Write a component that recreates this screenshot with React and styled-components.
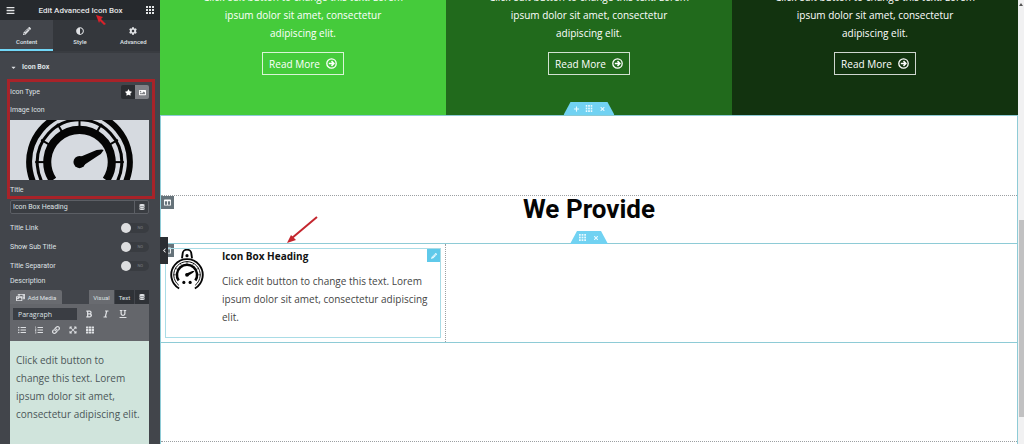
import React, { useState } from 'react';
import styled, { createGlobalStyle } from 'styled-components';
import {
  FaBars,
  FaPencilAlt,
  FaAdjust,
  FaCog,
  FaStar,
  FaImage,
  FaDatabase,
  FaLink,
  FaListUl,
  FaListOl,
  FaCaretDown,
  FaChevronLeft,
  FaColumns,
  FaPhotoVideo,
  FaExpandArrowsAlt,
  FaTh,
  FaBold,
  FaItalic,
  FaUnderline,
  FaPlus,
  FaTimes,
} from 'react-icons/fa';

const GlobalStyle = createGlobalStyle`
  * {
    box-sizing: border-box;
  }
  body {
    margin: 0;
    background: #fff;
    font-family: 'Roboto', sans-serif;
  }
  button, input, select, textarea {
    margin: 0;
    padding: 0;
    border: none;
    border-radius: 0;
    font-family: inherit;
    font-size: inherit;
    color: inherit;
  }
  button {
    display: flex;
    align-items: center;
    justify-content: center;
    background: none;
    cursor: pointer;
  }
  h1, h2, h3, p {
    margin: 0;
  }
`;

const Page = styled.div`
  display: flex;
  height: 100vh;
  overflow: hidden;
`;

/* ---------- panel ---------- */

const Panel = styled.aside`
  position: relative;
  display: flex;
  flex-direction: column;
  flex: 0 0 160px;
  background: #42454b;
  color: #dfe1e4;
  font-size: 7px;
`;

const PanelHeader = styled.header`
  display: flex;
  align-items: center;
  justify-content: space-between;
  flex: 0 0 20px;
  padding: 0 6px;
  background: #26292d;
  color: #e4e5e7;
  font-size: 9px;
`;

const PanelTitle = styled.h1`
  position: relative;
  font-size: 8px;
  font-weight: 500;
`;

const TitleArrow = styled.svg`
  position: absolute;
  left: 56px;
  top: 8px;
  width: 14px;
  height: 14px;
`;

const Tabs = styled.nav`
  display: flex;
  flex: 0 0 31px;
  background: #34373c;
`;

const Tab = styled.button`
  flex: 1;
  flex-direction: column;
  gap: 3px;
  padding-top: 2px;
  font-size: 6px;
  font-weight: 500;
  border-bottom: 2px solid ${({ $active }) => ($active ? '#71d7f7' : '#34373c')};
  background: ${({ $active }) => ($active ? '#42454b' : 'transparent')};

  svg {
    font-size: 8px;
  }
`;

const SectionTitle = styled.button`
  justify-content: flex-start;
  gap: 5px;
  flex: 0 0 28px;
  padding: 2px 10px 0;
  border-top: 2px solid #393c41;
  font-size: 7px;
  font-weight: 700;
`;

const Highlight = styled.div`
  flex: none;
  margin: 0 5px 0 7px;
  padding: 3px 3px 0 0;
  border: 3px solid #a82329;
`;

const Row = styled.div`
  display: flex;
  align-items: center;
  justify-content: space-between;
  height: 14px;
`;

const Choices = styled.div`
  display: flex;
  height: 14px;
  border-radius: 2px;
  overflow: hidden;
`;

const Choice = styled.button`
  width: 14px;
  color: #fff;
  font-size: 7px;
  background: ${({ $active }) => ($active ? '#808287' : '#2a2d31')};
`;

const Label = styled.label`
  display: flex;
  align-items: center;
  flex: none;
  height: 12px;
  margin-top: ${({ $gap }) => $gap || 0}px;
`;

const Preview = styled.svg`
  display: block;
  width: 100%;
  height: 60px;
  margin: 4px 0;
  background: #d6dae0;
`;

const Fields = styled.div`
  display: flex;
  flex-direction: column;
  flex: 1;
  min-height: 0;
  padding: 1px 11px 0 10px;
`;

const TextField = styled.div`
  display: flex;
  flex: 0 0 14px;
  border: 1px solid #5c5f65;
  border-radius: 2px;
  background: #3a3d42;
  margin-bottom: 4px;

  input {
    flex: 1;
    min-width: 0;
    padding: 0 2px;
    background: transparent;
  }
  button {
    width: 14px;
    border-left: 1px solid #5c5f65;
    font-size: 6px;
  }
`;

const SwitchRow = styled.label`
  display: flex;
  align-items: center;
  justify-content: space-between;
  flex: 0 0 19px;
`;

const Switch = styled.span`
  position: relative;
  display: flex;
  align-items: center;
  justify-content: flex-end;
  width: 28px;
  height: 10px;
  padding-right: 6px;
  border-radius: 5px;
  background: #393c41;
  color: #7d8086;
  font-size: 4px;

  input {
    appearance: none;
    position: absolute;
    left: 0;
    top: 0;
    width: 10px;
    height: 10px;
    border-radius: 50%;
    background: #dddee0;
  }
`;

const EditorHead = styled.div`
  display: flex;
  align-items: stretch;
  flex: 0 0 14px;
  margin-top: 3px;
  font-size: 6px;
`;

const MediaButton = styled.button`
  gap: 3px;
  width: 52px;
  margin-right: auto;
  border-radius: 2px 2px 0 0;
  background: #696b70;

  svg {
    font-size: 9px;
  }
`;

const ModeButton = styled.button`
  width: ${({ $width }) => $width}px;
  background: ${({ $active }) => ($active ? '#696b70' : '#2f3237')};
  border-left: 1px solid #42454b;
`;

const Toolbar = styled.div`
  display: flex;
  flex-direction: column;
  flex: 0 0 37px;
  gap: 4px;
  padding: 4px 3px;
  background: #64666b;
`;

const ToolRow = styled.div`
  display: flex;
  align-items: center;
  height: 12px;
`;

const FormatSelect = styled.select`
  width: 64px;
  height: 12px;
  margin-right: 3px;
  padding-left: 5px;
  appearance: none;
  background: #3a3d43;
  font-family: 'Open Sans', sans-serif;
  font-size: 7px;
`;

const Tool = styled.button`
  width: 17px;
  height: 12px;
  font-size: 8px;
`;

const Editor = styled.textarea`
  flex: 1;
  width: 100%;
  padding: 10px 9px 10px 6px;
  resize: none;
  overflow: hidden;
  outline: none;
  background: #d0e4dc;
  color: #4b5658;
  font-family: 'Open Sans', sans-serif;
  font-size: 10px;
  line-height: 18px;
`;

const Collapse = styled.button`
  position: absolute;
  z-index: 3;
  left: 100%;
  top: 237px;
  width: 8px;
  height: 27px;
  background: #2b2e32;
  color: #fff;
  font-size: 5px;
`;

/* ---------- canvas ---------- */

const Canvas = styled.main`
  position: relative;
  display: flex;
  flex-direction: column;
  flex: 1;
  min-width: 0;
  font-family: 'Open Sans', sans-serif;
`;

const Hero = styled.section`
  position: relative;
  display: grid;
  grid-template-columns: repeat(3, 1fr);
  grid-template-rows: 115px;
  flex: none;
`;

const HeroCard = styled.article`
  display: flex;
  flex-direction: column;
  align-items: center;
  justify-content: flex-end;
  gap: 10px;
  padding: 0 34px 40px;
  background: ${({ $color }) => $color};
  color: #fff;
  overflow: hidden;
`;

const HeroText = styled.p`
  max-width: 204px;
  font-size: 10px;
  line-height: 18px;
  text-align: center;
`;

const ReadMore = styled.a`
  display: flex;
  align-items: center;
  gap: 6px;
  flex: none;
  height: 23px;
  padding: 0 6px;
  border: 1px solid rgba(255, 255, 255, 0.8);
  color: #fff;
  font-size: 10px;
  text-decoration: none;
`;

const Handle = styled.div`
  position: absolute;
  z-index: 2;
  left: 50%;
  bottom: ${({ $above }) => ($above ? '100%' : '0')};
  transform: translateX(-50%);
  display: flex;
  height: 13px;
  padding: 0 6px;
  background: #71d2f2;
  clip-path: polygon(7px 0, calc(100% - 7px) 0, 100% 100%, 0 100%);

  button {
    width: 13px;
    color: #e8f9ff;
    font-size: 6px;
  }
`;

const Frame = styled.div`
  display: flex;
  flex-direction: column;
  flex: 1;
  min-height: 0;
  padding-bottom: 2px;
  border: 1px solid #8ecbd6;
  border-bottom: none;
`;

const Spacer = styled.div`
  flex: 0 0 79px;
`;

const HeadingRow = styled.section`
  position: relative;
  flex: 0 0 48px;
  border-top: 1px dotted #9b9fa2;
  text-align: center;
`;

const Heading = styled.h2`
  color: #050505;
  font-family: 'Roboto', sans-serif;
  font-size: 26px;
  font-weight: 700;
  line-height: 26px;
`;

const ColumnHandle = styled.button`
  position: absolute;
  left: 0;
  top: 0;
  width: 13px;
  height: 13px;
  background: #66737a;
  color: #fff;
  font-size: 7px;
`;

const BoxRow = styled.section`
  position: relative;
  display: grid;
  grid-template-columns: 1fr 2fr;
  flex: none;
  border-top: 1px solid #8ecbd6;
  border-bottom: 1px solid #8ecbd6;
`;

const Column = styled.div`
  min-width: 0;
  padding: 4px;
  border-right: 1px dotted #9b9fa2;

  &:last-child {
    border-right: none;
  }
`;

const IconBox = styled.article`
  position: relative;
  display: flex;
  gap: 18px;
  height: 90px;
  padding: 0 5px 0 4px;
  border: 1px solid #a9dce6;
`;

const BoxIcon = styled.svg`
  flex: none;
  width: 34px;
  height: 41px;
`;

const BoxTitle = styled.h3`
  color: #111;
  font-size: 10px;
  line-height: 14px;
`;

const BoxText = styled.p`
  margin-top: 9px;
  color: #454545;
  font-size: 10px;
  line-height: 18px;
`;

const EditButton = styled.button`
  position: absolute;
  right: 0;
  top: 0;
  width: 13px;
  height: 13px;
  background: #5fc9ea;
  color: #e8f9ff;
  font-size: 6px;
`;

const EmptyRow = styled.section`
  flex: 1;
  border-bottom: 1px dotted #9b9fa2;
`;

const Pointer = styled.svg`
  position: absolute;
  z-index: 3;
  left: 126px;
  top: 216px;
  width: 33px;
  height: 28px;
`;

const Track = styled.div`
  display: flex;
  flex-direction: column;
  align-items: center;
  flex: 0 0 6px;
  background: #f1f1f2;
`;

const Thumb = styled.div`
  width: 5px;
  height: 197px;
  margin-top: 212px;
  background: #c1c1c2;
`;

const TrackArrow = styled.svg`
  width: 6px;
  height: 8px;
`;

const ringPoint = (radius, degrees) => {
  const a = (degrees * Math.PI) / 180;
  return `${radius * Math.cos(a)} ${radius * Math.sin(a)}`;
};

const Ring = ({ radius, width, end = 60 }) => (
  <path
    d={`M${ringPoint(radius, 180 - end)} A${radius} ${radius} 0 1 1 ${ringPoint(radius, end)}`}
    fill="none"
    stroke="#050505"
    strokeWidth={width}
  />
);

const Gauge = () => (
  <g>
    <path
      d="M-16 -52 L-14 -66 A14 14 0 0 1 14 -66 L16 -52"
      fill="none"
      stroke="#050505"
      strokeWidth="6"
    />
    <circle cx="0" cy="-61" r="5" fill="#050505" />
    <Ring radius={50} width={6} />
    <Ring radius={42} width={3} end={52} />
    <Ring radius={32} width={8} end={34} />
    {[180, 210, 240, 270, 300, 330, 360].map((angle) => (
      <path
        key={angle}
        d={`M${ringPoint(44, angle)} L${ringPoint(35, angle)}`}
        stroke="#050505"
        strokeWidth="2"
      />
    ))}
    <circle cx="0" cy="0" r="6" fill="#050505" />
    <path d="M-2 -4 L17 -12 Q23 -13 24 -12 Q22 -8 18 -6 L3 4 Z" fill="#050505" />
    <circle cx="-10" cy="24" r="5" fill="#050505" />
    <circle cx="10" cy="24" r="5" fill="#050505" />
  </g>
);

const GridIcon = ({ size = 8 }) => (
  <svg width={size} height={size} viewBox="0 0 8 8" fill="currentColor" aria-hidden="true">
    {[0, 3, 6].map((x) =>
      [0, 3, 6].map((y) => <rect key={`${x}-${y}`} x={x} y={y} width="2" height="2" />)
    )}
  </svg>
);

const CircleArrow = () => (
  <svg width="11" height="11" viewBox="0 0 11 11" fill="none" stroke="currentColor" aria-hidden="true">
    <circle cx="5.5" cy="5.5" r="4.7" strokeWidth="1.3" />
    <path d="M2.8 5.5h5M5.5 3.1l2.4 2.4-2.4 2.4" strokeWidth="1.5" />
  </svg>
);

const tabs = [
  { name: 'Content', icon: <FaPencilAlt /> },
  { name: 'Style', icon: <FaAdjust /> },
  { name: 'Advanced', icon: <FaCog /> },
];

const switches = ['Title Link', 'Show Sub Title', 'Title Separator'];
const heroColors = ['#45cb3b', '#216a1c', '#12330f'];
const text = 'Click edit button to change this text. Lorem ipsum dolor sit amet, consectetur adipiscing elit.';

const App = () => {
  const [tab, setTab] = useState('Content');
  const [title, setTitle] = useState('Icon Box Heading');
  const [description, setDescription] = useState(text);

  return (
    <Page>
      <GlobalStyle />
      <Panel>
        <PanelHeader>
          <button aria-label="Menu"><FaBars /></button>
          <PanelTitle>
            Edit Advanced Icon Box
            <TitleArrow viewBox="0 0 14 14" aria-hidden="true">
              <path d="M2 1 L9 3 L7 5 L12 10 L10 11 L6 7 L5 9 Z" fill="#d8222a" />
            </TitleArrow>
          </PanelTitle>
          <button aria-label="Widgets"><GridIcon /></button>
        </PanelHeader>
        <Tabs>
          {tabs.map(({ name, icon }) => (
            <Tab key={name} $active={tab === name} onClick={() => setTab(name)}>
              {icon}
              {name}
            </Tab>
          ))}
        </Tabs>
        <SectionTitle><FaCaretDown />Icon Box</SectionTitle>
        <Highlight>
          <Row>
            <span>Icon Type</span>
            <Choices>
              <Choice aria-label="Icon"><FaStar /></Choice>
              <Choice aria-label="Image" $active><FaImage /></Choice>
            </Choices>
          </Row>
          <Label as="div" $gap={5}>Image Icon</Label>
          <Preview viewBox="-69 -42 138 60" preserveAspectRatio="xMidYMid slice" role="img">
            <Gauge />
          </Preview>
          <Label htmlFor="title">Title</Label>
        </Highlight>
        <Fields>
          <TextField>
            <input id="title" value={title} onChange={(e) => setTitle(e.target.value)} />
            <button aria-label="Dynamic title"><FaDatabase /></button>
          </TextField>
          {switches.map((name) => (
            <SwitchRow key={name}>
              {name}
              <Switch>
                <input type="checkbox" />
                NO
              </Switch>
            </SwitchRow>
          ))}
          <Label htmlFor="description">Description</Label>
          <EditorHead>
            <MediaButton><FaPhotoVideo />Add Media</MediaButton>
            <ModeButton $width={26} $active>Visual</ModeButton>
            <ModeButton $width={20}>Text</ModeButton>
            <ModeButton $width={15} aria-label="Dynamic text"><FaDatabase /></ModeButton>
          </EditorHead>
          <Toolbar>
            <ToolRow>
              <FormatSelect aria-label="Format">
                <option>Paragraph</option>
              </FormatSelect>
              <Tool aria-label="Bold"><FaBold /></Tool>
              <Tool aria-label="Italic"><FaItalic /></Tool>
              <Tool aria-label="Underline"><FaUnderline /></Tool>
            </ToolRow>
            <ToolRow>
              <Tool aria-label="Bulleted list"><FaListUl /></Tool>
              <Tool aria-label="Numbered list"><FaListOl /></Tool>
              <Tool aria-label="Link"><FaLink /></Tool>
              <Tool aria-label="Fullscreen"><FaExpandArrowsAlt /></Tool>
              <Tool aria-label="Toolbar toggle"><FaTh /></Tool>
            </ToolRow>
          </Toolbar>
          <Editor
            id="description"
            value={description}
            onChange={(e) => setDescription(e.target.value)}
          />
        </Fields>
        <Collapse aria-label="Hide panel"><FaChevronLeft /></Collapse>
      </Panel>

      <Canvas>
        <Hero>
          {heroColors.map((color) => (
            <HeroCard key={color} $color={color}>
              <HeroText>{text}</HeroText>
              <ReadMore href="#more">Read More <CircleArrow /></ReadMore>
            </HeroCard>
          ))}
          <Handle>
            <button aria-label="Add section"><FaPlus /></button>
            <button aria-label="Edit section"><GridIcon size={7} /></button>
            <button aria-label="Remove section"><FaTimes /></button>
          </Handle>
        </Hero>
        <Frame>
          <Spacer />
          <HeadingRow>
            <ColumnHandle aria-label="Edit column"><FaColumns /></ColumnHandle>
            <Heading>We Provide</Heading>
          </HeadingRow>
          <BoxRow>
            <Handle $above>
              <button aria-label="Edit inner section"><GridIcon size={7} /></button>
              <button aria-label="Remove inner section"><FaTimes /></button>
            </Handle>
            <ColumnHandle aria-label="Edit inner column"><FaColumns /></ColumnHandle>
            <Column>
              <IconBox>
                <BoxIcon viewBox="-54 -82 108 130" aria-hidden="true">
                  <Gauge />
                </BoxIcon>
                <div>
                  <BoxTitle>{title}</BoxTitle>
                  <BoxText>{description}</BoxText>
                </div>
                <EditButton aria-label="Edit widget"><FaPencilAlt /></EditButton>
              </IconBox>
            </Column>
            <Column />
          </BoxRow>
          <EmptyRow />
        </Frame>
        <Pointer viewBox="0 0 33 28" aria-hidden="true">
          <path d="M31 1 L6 22" stroke="#c4262e" strokeWidth="2" />
          <path d="M1 27 L5 19 L10 24 Z" fill="#c4262e" />
        </Pointer>
      </Canvas>
      <Track>
        <TrackArrow viewBox="0 0 6 8" aria-hidden="true">
          <path d="M1 6 L3 3 L5 6 Z" fill="#555" />
        </TrackArrow>
        <Thumb />
      </Track>
    </Page>
  );
};

export default App;
